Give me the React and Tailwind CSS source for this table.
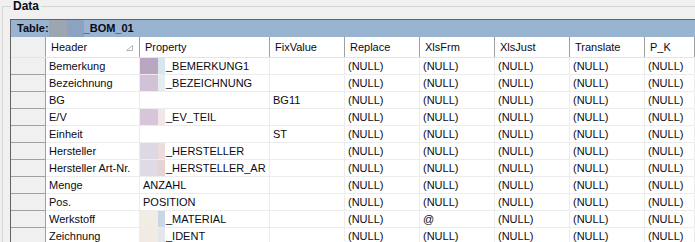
import React from "react";

const COLS = [
  { key: "header", label: "Header", w: "w-[94px]" },
  { key: "property", label: "Property", w: "w-[130px]" },
  { key: "fix", label: "FixValue", w: "w-[75px]" },
  { key: "replace", label: "Replace", w: "w-[75px]" },
  { key: "xlsFrm", label: "XlsFrm", w: "w-[75px]" },
  { key: "xlsJust", label: "XlsJust", w: "w-[75px]" },
  { key: "translate", label: "Translate", w: "w-[75px]" },
  { key: "pk", label: "P_K", w: "flex-1" },
];

// blur = the two pixelated blocks in front of the property name
const ROWS = [
  { header: "Bemerkung", property: "_BEMERKUNG1", blur: ["bg-[#b9a6c0]", "bg-[#d6e8ee]"] },
  { header: "Bezeichnung", property: "_BEZEICHNUNG", blur: ["bg-[#d3c1d7]", "bg-[#e3eeee]"] },
  { header: "BG", fix: "BG11" },
  { header: "E/V", property: "_EV_TEIL", blur: ["bg-[#d7c6da]", "bg-[#f2e6ea]"] },
  { header: "Einheit", fix: "ST" },
  { header: "Hersteller", property: "_HERSTELLER", blur: ["bg-[#dcd9e2]", "bg-[#eddcdc]"] },
  { header: "Hersteller Art-Nr.", property: "_HERSTELLER_AR", blur: ["bg-[#dedbe4]", "bg-[#e6d3d3]"] },
  { header: "Menge", property: "ANZAHL" },
  { header: "Pos.", property: "POSITION" },
  { header: "Werkstoff", property: "_MATERIAL", blur: ["bg-[#f2ede4]", "bg-[#c9d6e6]"], xlsFrm: "@" },
  { header: "Zeichnung", property: "_IDENT", blur: ["bg-[#f1ebe3]", "bg-[#e3e6ea]"] },
];

const NULL_COLS = ["replace", "xlsFrm", "xlsJust", "translate", "pk"];

const SortGlyph = () => (
  <svg width="7" height="6" viewBox="0 0 7 6" className="ml-auto mr-[6px]">
    <path d="M6.5 0.5 L6.5 5.5 L0.5 5.5 Z" fill="none" stroke="#b4b4b4" strokeWidth="1" />
  </svg>
);

const cellText = (row, key) => {
  if (NULL_COLS.includes(key)) return row[key] || "(NULL)";
  return row[key] || "";
};

export default function App() {
  return (
    <div className="w-[695px] h-[242px] overflow-hidden bg-[#f0f0f0] text-[11px] text-[#0a0a14] font-['Liberation_Sans',Arial,sans-serif]">
      {/* Data group box */}
      <div className="relative mt-[6px] ml-[2px] border-l border-t border-[#d5d5d5] pl-[7px] pt-[12px]">
        <span className="absolute -top-[7px] left-[8px] bg-[#f0f0f0] px-[2px] text-[12px] font-bold leading-[13px]">
          Data
        </span>

        <div className="border-l border-t border-[#646464] bg-white">
          {/* title bar */}
          <div className="flex h-[17px] items-center bg-[#99b4d1] pl-[6px] font-bold">
            <span>Table:</span>
            <span className="h-full w-[18px] bg-[#9ba6b1]" />
            <span className="h-full w-[17px] bg-[#8ba2c0]" />
            <span>_BOM_01</span>
          </div>

          {/* column headers */}
          <div className="flex h-[21px] border-b border-[#e4e4e4]">
            <div className="w-[35px] shrink-0 border-r border-[#a0a0a0] bg-[#f0f0f0]" />
            {COLS.map((c) => (
              <div
                key={c.key}
                className={`${c.w} flex shrink-0 items-center border-r border-[#a0a0a0] pl-[5px] pt-[1px]`}
              >
                <span>{c.label}</span>
                {c.key === "header" && <SortGlyph />}
              </div>
            ))}
          </div>

          {/* rows */}
          {ROWS.map((row) => (
            <div key={row.header} className="flex h-[17px]">
              <div className="w-[35px] shrink-0 border-b border-r border-[#a0a0a0] bg-[#f0f0f0]" />
              {COLS.map((c) => (
                <div
                  key={c.key}
                  className={`${c.w} flex shrink-0 items-center overflow-hidden whitespace-nowrap border-b border-r border-[#ececec] ${
                    c.key === "property" && row.blur ? "pl-0" : "pl-[3px]"
                  }`}
                >
                  {c.key === "property" && row.blur && (
                    <>
                      <span className={`h-full w-[18px] shrink-0 ${row.blur[0]}`} />
                      <span className={`mr-[1px] h-full w-[7px] shrink-0 ${row.blur[1]}`} />
                    </>
                  )}
                  <span>{cellText(row, c.key)}</span>
                </div>
              ))}
            </div>
          ))}
        </div>
      </div>
    </div>
  );
}
